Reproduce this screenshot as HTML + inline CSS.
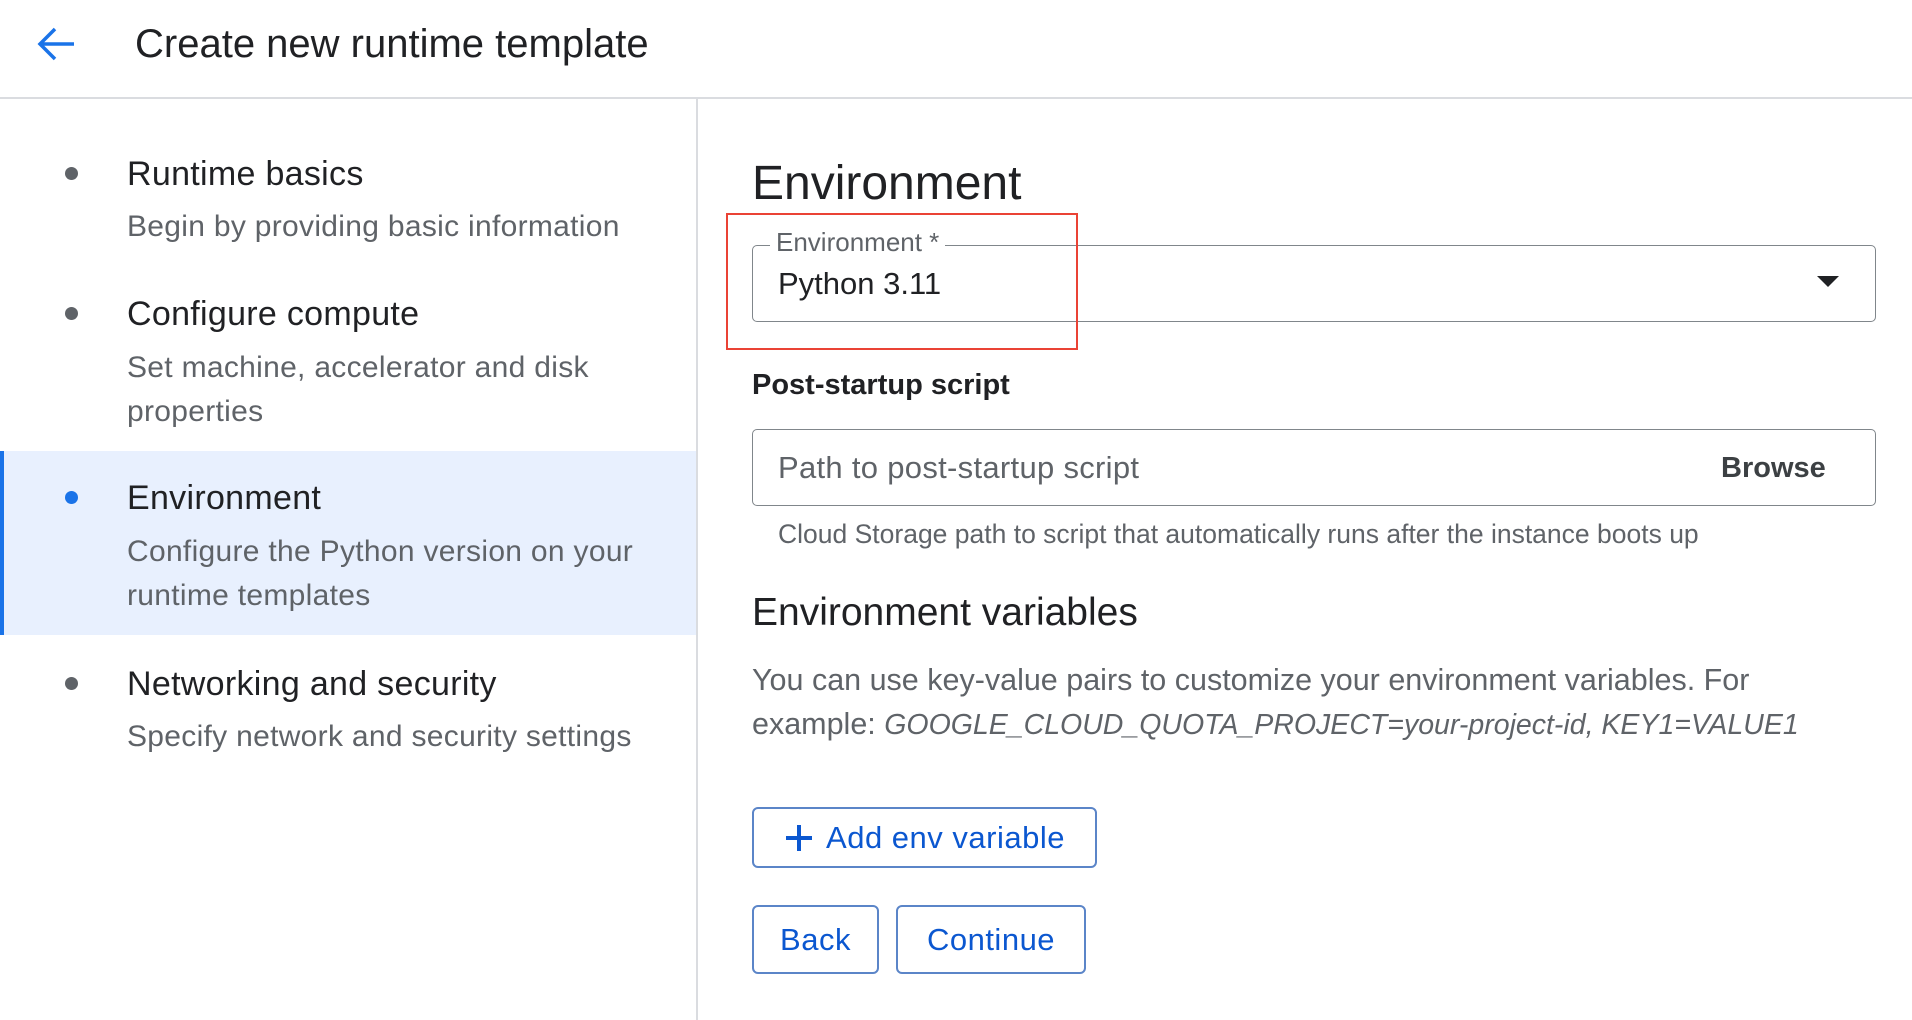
<!DOCTYPE html>
<html><head><meta charset="utf-8"><style>
*{margin:0;padding:0;box-sizing:border-box}
body{width:1912px;height:1020px;background:#fff;font-family:"Liberation Sans",Arial,sans-serif;position:relative;overflow:hidden;color:#202124}
.a{position:absolute;white-space:nowrap}
.t{line-height:40px}
.dot{position:absolute;width:13px;height:13px;border-radius:50%;background:#5f6368}
.st{font-size:34px;color:#202124;letter-spacing:0.3px}
.ss{font-size:30px;color:#5f6368;letter-spacing:0.3px}
.btn{position:absolute;border:2px solid #5b85c8;border-radius:6px;color:#0b57d0;font-size:31px;display:flex;align-items:center;justify-content:center;letter-spacing:0.5px}
</style></head><body>
<svg class="a" style="left:36px;top:26px" width="40" height="36" viewBox="0 0 40 36"><path d="M38 18H5M19 3L4 18l15 15" fill="none" stroke="#1a73e8" stroke-width="3.5"/></svg>
<div class="a t" style="left:135px;top:24px;font-size:40px;color:#202124">Create new runtime template</div>
<div class="a" style="left:0;top:97px;width:1912px;height:2px;background:#dadce0"></div>
<div class="a" style="left:696px;top:99px;width:2px;height:921px;background:#dadce0"></div>
<div class="a" style="left:0;top:451px;width:696px;height:184px;background:#e8f0fe"></div>
<div class="a" style="left:0;top:451px;width:4px;height:184px;background:#1a73e8"></div>

<div class="dot" style="left:65px;top:167px"></div>
<div class="a t st" style="left:127px;top:154px">Runtime basics</div>
<div class="a t ss" style="left:127px;top:207px">Begin by providing basic information</div>

<div class="dot" style="left:65px;top:307px"></div>
<div class="a t st" style="left:127px;top:294px">Configure compute</div>
<div class="a t ss" style="left:127px;top:348px">Set machine, accelerator and disk</div>
<div class="a t ss" style="left:127px;top:392px">properties</div>

<div class="dot" style="left:65px;top:491px;background:#1a73e8"></div>
<div class="a t st" style="left:127px;top:478px">Environment</div>
<div class="a t ss" style="left:127px;top:532px">Configure the Python version on your</div>
<div class="a t ss" style="left:127px;top:576px">runtime templates</div>

<div class="dot" style="left:65px;top:677px"></div>
<div class="a t st" style="left:127px;top:664px">Networking and security</div>
<div class="a t ss" style="left:127px;top:717px">Specify network and security settings</div>

<div class="a" style="left:752px;top:154px;font-size:48px;line-height:60px;color:#202124">Environment</div>

<div class="a" style="left:752px;top:245px;width:1124px;height:77px;border:1.5px solid #80868b;border-radius:5px"></div>
<div class="a" style="left:770px;top:227px;background:#fff;padding:0 6px;font-size:26px;line-height:30px;color:#5f6368">Environment *</div>
<div class="a" style="left:778px;top:264px;font-size:31px;line-height:40px;color:#202124">Python 3.11</div>
<svg class="a" style="left:1817px;top:276px" width="22" height="12"><path d="M0 0h22L11 11z" fill="#202124"/></svg>
<div class="a" style="left:726px;top:213px;width:352px;height:137px;border:2.5px solid #ea4335"></div>

<div class="a" style="left:752px;top:367px;font-size:29px;line-height:36px;font-weight:bold;color:#202124">Post-startup script</div>
<div class="a" style="left:752px;top:429px;width:1124px;height:77px;border:1.5px solid #80868b;border-radius:5px"></div>
<div class="a" style="left:778px;top:448px;font-size:31px;line-height:40px;color:#5f6368;letter-spacing:0.3px">Path to post-startup script</div>
<div class="a" style="left:1721px;top:448px;font-size:29px;line-height:40px;color:#3c4043;font-weight:bold">Browse</div>
<div class="a" style="left:778px;top:519px;font-size:26.5px;line-height:30px;color:#5f6368">Cloud Storage path to script that automatically runs after the instance boots up</div>

<div class="a" style="left:752px;top:591px;font-size:39px;line-height:44px;color:#202124">Environment variables</div>
<div class="a" style="left:752px;top:658px;font-size:30.5px;line-height:44px;color:#5f6368">You can use key-value pairs to customize your environment variables. For</div>
<div class="a" style="left:752px;top:702px;font-size:30.5px;line-height:44px;color:#5f6368">example: <i style="font-size:28.5px">GOOGLE_CLOUD_QUOTA_PROJECT=your-project-id, KEY1=VALUE1</i></div>

<div class="btn" style="left:752px;top:807px;width:345px;height:61px"><svg width="30" height="30" style="margin-right:12px"><path d="M15 2v26M2 15h26" stroke="#0b57d0" stroke-width="4"/></svg>Add env variable</div>
<div class="btn" style="left:752px;top:905px;width:127px;height:69px">Back</div>
<div class="btn" style="left:896px;top:905px;width:190px;height:69px">Continue</div>
</body></html>
